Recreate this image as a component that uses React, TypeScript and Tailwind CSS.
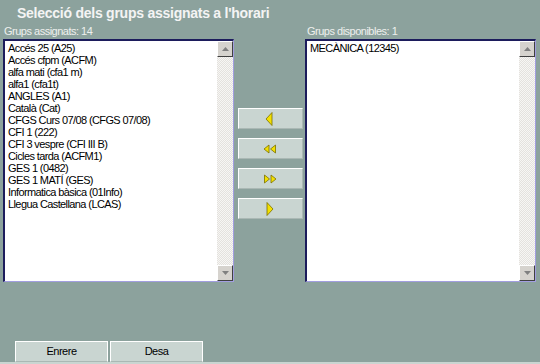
const assignats = [
  "Accés 25 (A25)",
  "Accés cfpm (ACFM)",
  "alfa mati (cfa1 m)",
  "alfa1 (cfa1t)",
  "ANGLES (A1)",
  "Català (Cat)",
  "CFGS Curs 07/08 (CFGS 07/08)",
  "CFI 1 (222)",
  "CFI 3 vespre (CFI III B)",
  "Cicles tarda (ACFM1)",
  "GES 1 (0482)",
  "GES 1 MATÍ (GES)",
  "Informatica bàsica (01Info)",
  "Llegua Castellana (LCAS)",
];

const disponibles = ["MECÀNICA (12345)"];

function ScrollArrow({ up }: { up: boolean }) {
  return (
    <div className="w-4 h-4 bg-[#d6d3ce] border-t border-l border-t-white border-l-white border-r border-b border-r-[#404040] border-b-[#404040] flex items-center justify-center">
      <svg width="7" height="4" viewBox="0 0 7 4">
        {up ? <polygon points="3.5,0 7,4 0,4" fill="#808080" /> : <polygon points="0,0 7,0 3.5,4" fill="#808080" />}
      </svg>
    </div>
  );
}

function ListBox({ items }: { items: string[] }) {
  return (
    <div className="w-[231px] h-[243px] bg-white flex border-t-2 border-l-2 border-t-[#1c1c5c] border-l-[#1c1c5c] border-r border-b border-r-[#a29ee0] border-b-[#a29ee0]">
      <ul className="flex-1 pl-[3px] pt-[1px] text-[11px] leading-[12px] tracking-[-0.6px] text-black">
        {items.map((it) => (
          <li key={it} className="whitespace-nowrap">{it}</li>
        ))}
      </ul>
      <div className="w-4 flex flex-col bg-[repeating-conic-gradient(#e4e2de_0_25%,#f7f6f4_0_50%)] bg-[length:2px_2px]">
        <ScrollArrow up />
        <div className="flex-1" />
        <ScrollArrow up={false} />
      </div>
    </div>
  );
}

function MoveButton({ kind }: { kind: "l" | "ll" | "rr" | "r" }) {
  return (
    <button className="w-[65px] h-[21px] bg-[#c9d5d1] border-t border-l border-white border-r border-b border-r-[#aab8b4] border-b-[#aab8b4] flex items-center justify-center">
      <svg width="14" height="14" viewBox="0 0 14 14">
        {kind === "l" && <polygon points="9,0.5 9,13.5 3,7" fill="#f3e000" stroke="#7a7000" strokeWidth="0.8" />}
        {kind === "r" && <polygon points="4,0.5 4,13.5 10,7" fill="#f3e000" stroke="#7a7000" strokeWidth="0.8" />}
        {kind === "ll" && (
          <>
            <polygon points="6,3 6,11 1,7" fill="#f3e000" stroke="#7a7000" strokeWidth="0.8" />
            <polygon points="12.5,3 12.5,11 7.5,7" fill="#f3e000" stroke="#7a7000" strokeWidth="0.8" />
          </>
        )}
        {kind === "rr" && (
          <>
            <polygon points="1.5,3 1.5,11 6.5,7" fill="#f3e000" stroke="#7a7000" strokeWidth="0.8" />
            <polygon points="8,3 8,11 13,7" fill="#f3e000" stroke="#7a7000" strokeWidth="0.8" />
          </>
        )}
      </svg>
    </button>
  );
}

export default function App() {
  return (
    <div className="w-[540px] h-[364px] bg-[#8ca29d] font-['Liberation_Sans',Arial,sans-serif] relative overflow-hidden">
      <h1 className="pl-[17px] pt-[4px] h-[24px] text-[14px] font-bold tracking-[-0.25px] text-[#f4f4f4] leading-[18px]">
        Selecció dels grups assignats a l'horari
      </h1>
      <div className="flex pl-[3px]">
        <div className="flex flex-col">
          <div className="pl-[1px] h-[15px] text-[11px] tracking-[-0.5px] leading-[15px] text-[#eef0ee]">Grups assignats: 14</div>
          <ListBox items={assignats} />
        </div>
        <div className="w-[71px] flex flex-col items-center pl-[1px] pt-[84px] gap-[9px]">
          <MoveButton kind="l" />
          <MoveButton kind="ll" />
          <MoveButton kind="rr" />
          <MoveButton kind="r" />
        </div>
        <div className="flex flex-col">
          <div className="pl-[2px] h-[15px] text-[11px] tracking-[-0.5px] leading-[15px] text-[#eef0ee]">Grups disponibles: 1</div>
          <ListBox items={disponibles} />
        </div>
      </div>
      <div className="flex gap-[2px] pl-[15px] pt-[59px]">
        <button className="w-[93px] h-[21px] bg-[#c9d5d1] border-t border-l border-white border-r border-b border-r-white border-b-[#aab8b4] text-[11px] tracking-[-0.5px] text-black">
          Enrere
        </button>
        <button className="w-[93px] h-[21px] bg-[#c9d5d1] border-t border-l border-white border-r border-b border-r-white border-b-[#aab8b4] text-[11px] tracking-[-0.5px] text-black">
          Desa
        </button>
      </div>
      <div className="absolute left-0 right-0 bottom-0 h-[2px] bg-[#c9d5d1]" />
    </div>
  );
}
